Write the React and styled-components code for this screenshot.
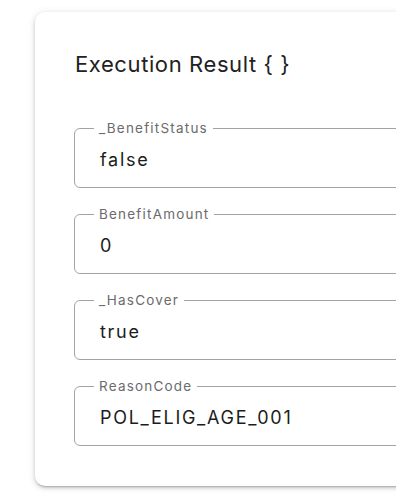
import React from 'react';
import styled, { createGlobalStyle } from 'styled-components';

const GlobalStyle = createGlobalStyle`
  html, body {
    margin: 0;
    padding: 0;
    background: #ffffff;
    overflow: hidden;
  }
  body {
    font-family: Inter, "Noto Sans", sans-serif;
    -webkit-font-smoothing: antialiased;
  }
`;

const Page = styled.div`
  padding: 12px 0 0 35px;
  width: 396px;
  height: 500px;
  box-sizing: border-box;
`;

const Card = styled.div`
  width: 520px;
  box-sizing: border-box;
  background: #fff;
  border-radius: 10px;
  padding: 38px 40px 40px 39px;
  box-shadow: 0 2px 2px -1px rgba(0, 0, 0, 0.2), 0 2px 4px 0 rgba(0, 0, 0, 0.14), 0 1px 8px 0 rgba(0, 0, 0, 0.1);
`;

const Title = styled.h2`
  margin: 0 0 42px 1px;
  font-size: 22px;
  line-height: 28px;
  font-weight: 400;
  letter-spacing: 0.6px;
  color: #222;
`;

const Fields = styled.div`
  display: flex;
  flex-direction: column;
  gap: 18px;
`;

const Field = styled.fieldset`
  margin: 0;
  padding: 0 25px;
  border: 1px solid #a3a3a3;
  border-radius: 6px;
  min-width: 0;
`;

const Label = styled.legend`
  margin-left: -6px;
  padding: 0 5px;
  font-size: 13.5px;
  line-height: 16px;
  letter-spacing: 1.2px;
  color: #6b6b6b;
`;

const Value = styled.div`
  height: 51px;
  line-height: 47px;
  font-size: 18px;
  color: #1c1c1c;
  letter-spacing: 1.7px;
`;

const results = [
  { label: '_BenefitStatus', value: 'false' },
  { label: 'BenefitAmount', value: '0' },
  { label: '_HasCover', value: 'true' },
  { label: 'ReasonCode', value: 'POL_ELIG_AGE_001' },
];

export default function App() {
  return (
    <Page>
      <GlobalStyle />
      <Card>
        <Title>Execution Result {'{ }'}</Title>
        <Fields>
          {results.map(r => (
            <Field key={r.label}>
              <Label>{r.label}</Label>
              <Value>{r.value}</Value>
            </Field>
          ))}
        </Fields>
      </Card>
    </Page>
  );
}
